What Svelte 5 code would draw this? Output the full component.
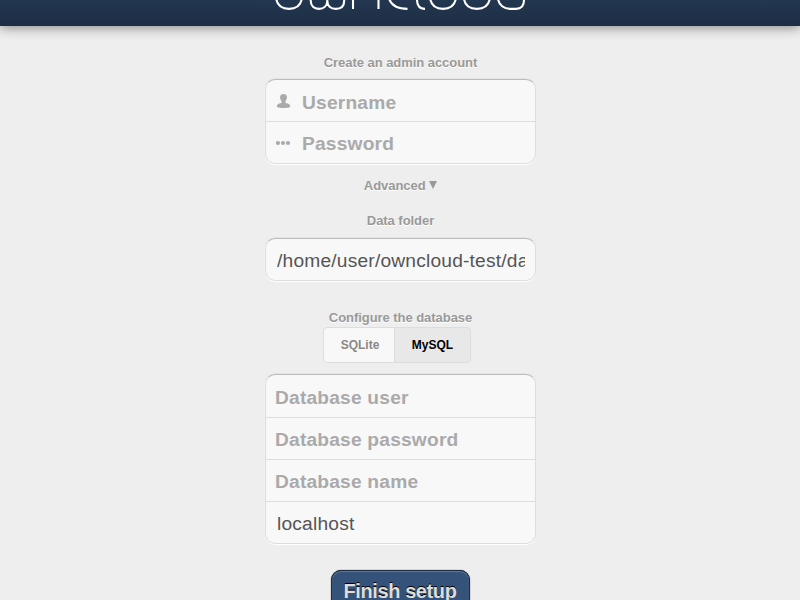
<script>
  const dbFields = ['Database user', 'Database password', 'Database name'];
  let selected = $state('MySQL');
</script>

<div class="page">
  <header>
    <svg class="logo" width="252" height="12" viewBox="275 0 252 12" fill="none" stroke="#fff" stroke-width="2.1" aria-label="ownCloud">
      <path d="M276.2-1C277.5 5.500 282.500 8.900 289 8.900S300.500 5.500 301.800-1" />
      <path d="M310.700-2V0.500C310.700 6 314 8.900 318.800 8.900S327.300 6 327.300 0.500V-2V0.500C327.300 6 330.500 8.900 335.800 8.900S344.200 6 344.200 0.500V-2" />
      <path d="M353 9V-2M378.500 9V-2" />
      <path d="M389.200-1C391.500 5.500 398 8.900 407.500 8.900" />
      <path d="M417-2V0C417 5.500 419.500 8.900 425 8.900" />
      <path d="M430.200-1C431.500 5.500 436.500 8.900 443 8.900S454.500 5.500 455.800-1" />
      <path d="M464-1C465 5.500 470 8.900 477 8.900S488.500 5.500 489.800-1" />
      <path d="M498-1C499 5 504 8.900 510.500 8.900H516C521.500 8.900 524 5.500 524 0V-2" />
    </svg>
  </header>

  <main>
    <h2 class="account">Create an admin account</h2>
    <div class="group login">
      <label>
        <svg width="15" height="15" viewBox="0 0 15 15" fill="#aaa"><path d="M7.500 0C5.300 0 3.900 1.400 4 3.500C4.100 5 4.900 6.200 5.500 7.200V9C3.700 9.300 1 10 .8 12C.7 13 1.500 14 7.500 14S14.300 13 14.200 12C14 10 11.300 9.300 9.500 9V7.200C10.100 6.200 10.900 5 11 3.500C11.100 1.400 9.700 0 7.500 0Z" /></svg>
        <input type="text" placeholder="Username" />
      </label>
      <label>
        <svg width="15" height="15" viewBox="0 0 15 15" fill="#aaa"><circle cx="2" cy="8" r="2.100" /><circle cx="7" cy="8" r="2.100" /><circle cx="12" cy="8" r="2.100" /></svg>
        <input type="password" placeholder="Password" />
      </label>
    </div>

    <h2 class="advanced">Advanced <svg width="8" height="8" viewBox="0 0 8 8"><path d="M0 0H8L4 8Z" fill="#999" /></svg></h2>

    <h2 class="folder">Data folder</h2>
    <div class="group data"><label><input type="text" class="filled" value="/home/user/owncloud-test/data" /></label></div>

    <h2 class="configure">Configure the database</h2>
    <div class="tabs">
      {#each ['SQLite', 'MySQL'] as db}
        <button class:active={selected === db} onclick={() => (selected = db)}>{db}</button>
      {/each}
    </div>

    <div class="group database">
      {#each dbFields as field}
        <label><input type="text" placeholder={field} /></label>
      {/each}
      <label><input type="text" class="filled" value="localhost" /></label>
    </div>

    <button class="submit">Finish setup</button>
  </main>
</div>

<style>
  :global(body) { margin: 0; background: #eee; }
  .page {
    height: 600px;
    overflow: hidden;
    background: #eee;
    font-family: 'Liberation Sans', Arial, sans-serif;
  }
  header {
    height: 26px;
    background: linear-gradient(#233751, #1d2d44);
    box-shadow: 0 2px 12px rgba(0, 0, 0, .42);
    display: flex;
    justify-content: center;
    padding-left: 2px;
  }
  .logo { display: block; }
  main { display: flex; flex-direction: column; align-items: center; }
  h2 {
    margin: 0;
    padding-left: 1px;
    height: 15px;
    font-size: 13px;
    line-height: 15px;
    letter-spacing: -.05px;
    font-weight: bold;
    color: #999;
    text-shadow: 0 1px 0 #fff;
    white-space: pre;
  }
  .account { margin-top: 29px; }
  .advanced { margin-top: 14px; }
  .advanced svg { margin-left: 0; vertical-align: 1px; }
  .folder { margin-top: 20px; }
  .configure { margin-top: 29px; }
  .group {
    box-sizing: border-box;
    width: 271px;
    margin-top: 9px;
    border: 1px solid #ddd;
    border-top-color: #bbb;
    border-radius: 10px;
    background: #f8f8f8;
    box-shadow: 0 1px 1px #fff, 0 -1px 0 #e5e5e5;
    overflow: hidden;
  }
  label {
    box-sizing: border-box;
    height: 42px;
    display: flex;
    align-items: center;
    padding: 0 10px 0 9.5px;
  }
  label + label { border-top: 1px solid #ddd; }
  label:first-child { padding-top: 2px; }
  .login label { height: 41px; padding-left: 10px; gap: 11.5px; }
  .login label + label { height: 42px; }
  .data { margin-top: 10px; }
  .data label { height: 41px; padding-top: 0; }
  label svg { flex: none; }
  input {
    flex: 1;
    min-width: 0;
    height: 24px;
    padding: 2px 0 0;
    border: 0;
    outline: 0;
    background: transparent;
    font: 19.2px/22px 'Liberation Sans', Arial, sans-serif;
    letter-spacing: .19px;
    color: #555;
  }
  input::placeholder { color: #aaa; font-weight: bold; opacity: 1; }
  .filled { padding-left: 2px; }
  .tabs { display: flex; margin: 2px 0 0; transform: translateX(-3px); }
  .tabs button {
    box-sizing: border-box;
    width: 72px;
    height: 36px;
    padding: 0 0 0 2px;
    border: 1px solid #ddd;
    border-radius: 4px 0 0 4px;
    background: #f8f8f8;
    color: #888;
    font: bold 12px 'Liberation Sans', Arial, sans-serif;
  }
  .tabs button + button { width: 77px; padding: 0; margin-left: -1px; border-radius: 0 4px 4px 0; }
  .tabs .active { background: #e8e8e8; color: #000; }
  .database { margin-top: 11px; }
  .submit {
    box-sizing: border-box;
    width: 139px;
    height: 42px;
    flex: none;
    margin-top: 26px;
    padding: 0;
    border: 1px solid #1d2d44;
    border-radius: 10px;
    background: #35537a;
    color: #ddd;
    font: bold 20px 'Liberation Sans', Arial, sans-serif;
    letter-spacing: -.4px;
    text-shadow: #000 0 -1px 0;
    box-shadow: 0 0 1px #000, inset 0 1px 1px #5e7a9e;
  }
</style>
